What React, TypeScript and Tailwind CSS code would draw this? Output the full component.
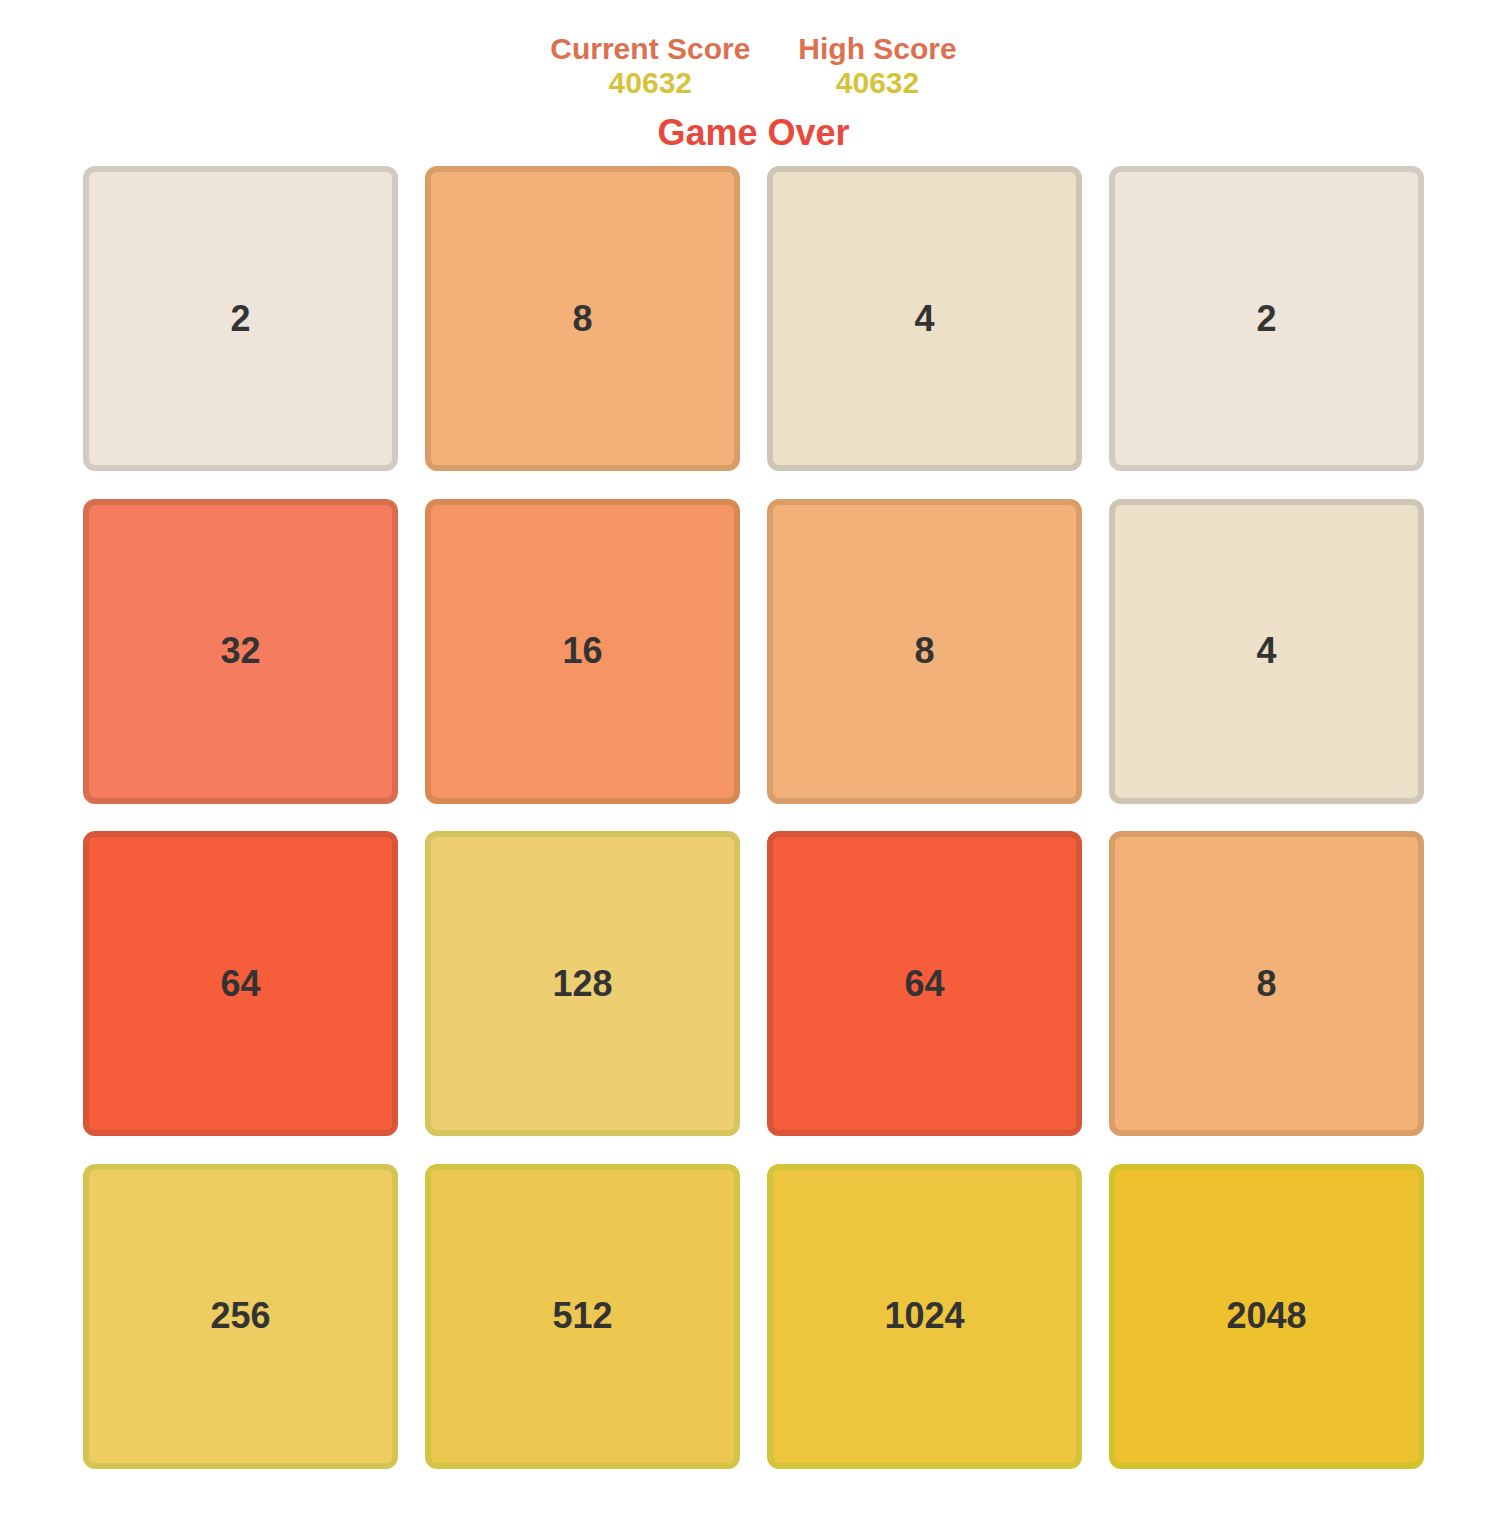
import React from "react";

const styles: Record<number, { bg: string; border: string }> = {
  2: { bg: "bg-[#eee4da]", border: "border-[#d3cbc1]" },
  4: { bg: "bg-[#ede0c8]", border: "border-[#cfc5b5]" },
  8: { bg: "bg-[#f2b179]", border: "border-[#d99e67]" },
  16: { bg: "bg-[#f59563]", border: "border-[#d88853]" },
  32: { bg: "bg-[#f67c5f]", border: "border-[#d86e50]" },
  64: { bg: "bg-[#f65e3b]", border: "border-[#d95537]" },
  128: { bg: "bg-[#edcf72]", border: "border-[#d4c55c]" },
  256: { bg: "bg-[#edcc61]", border: "border-[#d4c453]" },
  512: { bg: "bg-[#edc850]", border: "border-[#d4c445]" },
  1024: { bg: "bg-[#edc53f]", border: "border-[#d4c43a]" },
  2048: { bg: "bg-[#edc22e]", border: "border-[#d4c22c]" },
};

const board = [2, 8, 4, 2, 32, 16, 8, 4, 64, 128, 64, 8, 256, 512, 1024, 2048];

export default function App() {
  return (
    <div
      className="min-h-[1531px] w-full bg-white"
      style={{ fontFamily: '"Liberation Sans", Arial, sans-serif' }}
    >
      <div className="ml-[83px] w-[1341px] pt-[32px] font-bold">
        <div className="flex justify-center gap-[48px] text-[30px] leading-[34px]">
          <div className="flex flex-col items-center">
            <span className="text-[#dc704f]">Current Score</span>
            <span className="text-[#d6c33c]">40632</span>
          </div>
          <div className="flex flex-col items-center">
            <span className="text-[#dc704f]">High Score</span>
            <span className="text-[#d6c33c]">40632</span>
          </div>
        </div>
        <div className="mt-[12px] text-center text-[36px] leading-[41px] text-[#e8493d]">
          Game Over
        </div>
        <div className="mt-[13px] grid grid-cols-[repeat(4,315px)] gap-x-[27px] gap-y-[27.5px]">
          {board.map((v, i) => (
            <div
              key={i}
              className={`flex h-[305px] w-[315px] items-center justify-center rounded-[12px] border-[6px] text-[36px] text-[#333333] ${styles[v].bg} ${styles[v].border}`}
            >
              {v}
            </div>
          ))}
        </div>
      </div>
    </div>
  );
}
